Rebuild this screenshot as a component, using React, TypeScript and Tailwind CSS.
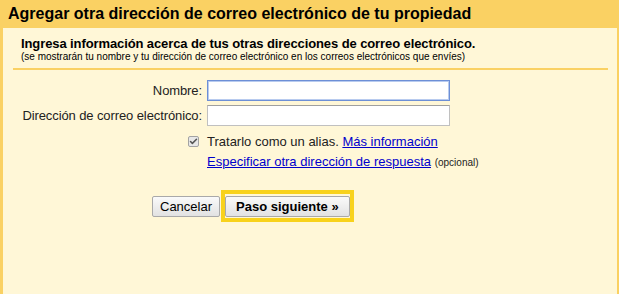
import { Check } from 'lucide-react';

export default function App() {
  return (
    <div className="w-[619px] h-[294px] bg-[#fad163] pl-[3px] pr-[2px] flex flex-col font-['Liberation_Sans',Arial,sans-serif] text-[#222]">
      {/* Title bar */}
      <div className="h-[28px] shrink-0 pl-[5px] pt-[4px]">
        <h1 className="text-[16px] leading-[19px] font-bold text-black">
          Agregar otra dirección de correo electrónico de tu propiedad
        </h1>
      </div>

      {/* Panel */}
      <div className="flex-1 bg-[#fff7d7] flex flex-col">
        <div className="pl-[18px] pt-[8px]">
          <div className="text-[13px] leading-[15px] font-bold text-black tracking-[-0.1px]">
            Ingresa información acerca de tus otras direcciones de correo electrónico.
          </div>
          <div className="text-[10px] leading-[12px] text-black">
            (se mostrarán tu nombre y tu dirección de correo electrónico en los correos electrónicos que envíes)
          </div>
        </div>
        <div className="ml-[10px] mr-[9px] mt-[5px] h-[2px] bg-[#fad163]" />

        {/* Form */}
        <div className="grid grid-cols-[199px_243px] gap-x-[5px] mt-[10px] text-[13px] leading-[15px]">
          <label className="text-right self-center tracking-[-0.1px]">Nombre:</label>
          <input className="h-[21px] bg-white border border-[#6d8fd6] shadow-[inset_0_0_0_1px_#b8cbef] outline-none px-1" />

          <label className="text-right self-center mt-[4px] tracking-[-0.1px]">Dirección de correo electrónico:</label>
          <input className="h-[21px] mt-[4px] bg-white border border-[#c0c0c0] border-t-[#a0a0a0] outline-none px-1" />

          <div className="flex justify-end items-center mt-[8px]">
            <span className="w-[11px] h-[11px] mr-[3px] rounded-[2px] border border-[#a3a3a3] bg-[#e8e8e8] flex items-center justify-center">
              <Check className="w-[9px] h-[9px] text-[#555]" strokeWidth={4} />
            </span>
          </div>
          <div className="mt-[8px]">
            Tratarlo como un alias.{' '}
            <a href="#" className="text-[#0000cc] underline">Más información</a>
          </div>

          <div />
          <div className="mt-[5px] whitespace-nowrap">
            <a href="#" className="text-[#0000cc] underline">Especificar otra dirección de respuesta</a>{' '}
            <span className="text-[10px] text-[#222]">(opcional)</span>
          </div>
        </div>

        {/* Buttons */}
        <div className="flex items-center mt-[20px] pl-[149px]">
          <button className="h-[21px] px-[7px] text-[13px] text-black border border-[#a9a9a9] rounded-[2px] bg-gradient-to-b from-[#fafafa] to-[#e2e2e2]">
            Cancelar
          </button>
          <div className="border-[4px] border-[#f8d21c] ml-[1px]">
            <button className="h-[21px] px-[10px] text-[13px] font-bold text-black border border-[#a9a9a9] rounded-[2px] bg-gradient-to-b from-[#fafafa] to-[#e2e2e2]">
              Paso siguiente »
            </button>
          </div>
        </div>
      </div>
    </div>
  );
}
